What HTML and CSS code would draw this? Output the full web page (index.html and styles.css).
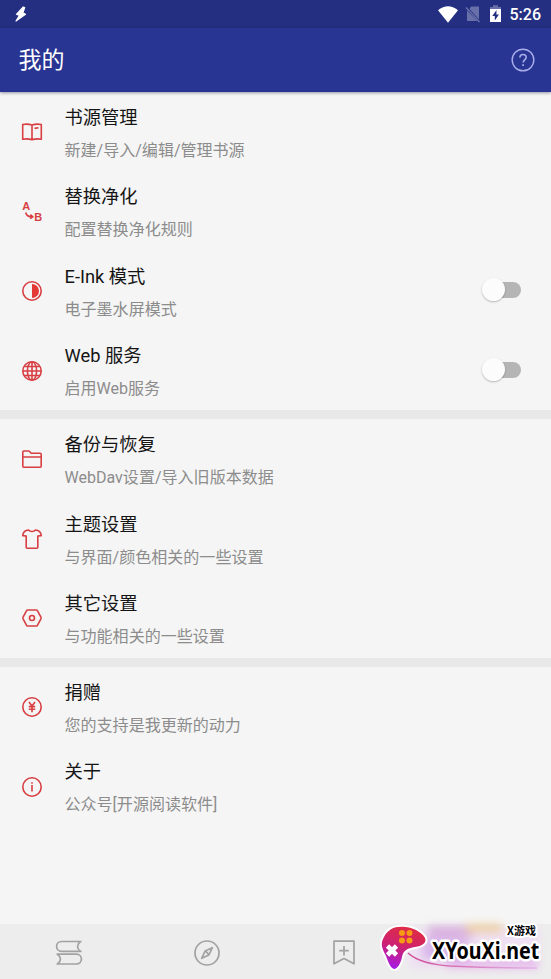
FILE: index.html
```html
<!DOCTYPE html>
<html lang="zh-CN">
<head>
<meta charset="utf-8">
<title>我的</title>
<link rel="stylesheet" href="styles.css">
</head>
<body>
<div class="screen">
  <div class="status">
    <svg class="bolt" width="14" height="18" viewBox="0 0 14 18"><path d="M9.3 2 2.4 9.3l3 1.2L2 16l9.5-6.8-2.6-1.4 1.8-5.3z" fill="#fff" stroke="#fff" stroke-width="1.2" stroke-linejoin="round"/></svg>
    <div class="status-right">
      <svg width="20" height="17" viewBox="0 0 20 17"><path d="M0 4.3Q10-4 20 4.3L10 16.7z" fill="#fff"/></svg>
      <svg class="sim" width="16" height="18" viewBox="0 0 16 18"><path d="M6 1.5h8v13L4.5 4zM2 5.5 12.5 16H2z" fill="#686fa9"/><path d="M1 2.5 14.5 17" stroke="#686fa9" stroke-width="1.5"/></svg>
      <svg class="battery" width="11" height="18" viewBox="0 0 11 18"><path d="M0 2h3V.3h5V2h3v3H0z" fill="#686fa9"/><path d="M0 4h11v13H0z" fill="#fff"/><path d="M6.5 5 2.3 11h2.5v4.5L9 9.5H6.4z" fill="#242f82"/></svg>
      <span class="clock">5:26</span>
    </div>
  </div>
  <header class="bar">
    <h1>我的</h1>
    <svg width="24" height="24" viewBox="0 0 24 24" fill="none" stroke="#a9aeea" stroke-width="1.4"><circle cx="12" cy="12" r="10.8"/><path d="M8.9 9.5c0-4.1 6.3-4 6.3-.2 0 2.4-3.1 2.6-3.1 5.3" stroke-width="1.6"/><path d="M12.1 16.2v1.9" stroke-width="1.7"/></svg>
  </header>
  <main class="list">
    <section>
      <div class="row">
        <svg class="icon" viewBox="0 0 22 22"><path d="M1.7 3.5c3-.6 6-.6 9.3.4 3.3-1 6.3-1 9.3-.4v14.8c-3-.6-6-.6-9.3.5-3.3-1.1-6.3-1.1-9.3-.5zM11 4V19M13.5 7.4l4-.6"/></svg>
        <div class="text"><b>书源管理</b><span>新建/导入/编辑/管理书源</span></div>
      </div>
      <div class="row">
        <svg class="icon" viewBox="0 0 22 22"><text x="1.2" y="10" class="letter">A</text><text x="13.2" y="20.7" class="letter">B</text><path d="M4.7 12.5c.6 2.8 2.8 4.4 6.5 4.4M9.4 14.7l2.5 2.2-2.7 1.8"/></svg>
        <div class="text"><b>替换净化</b><span>配置替换净化规则</span></div>
      </div>
      <div class="row">
        <svg class="icon" viewBox="0 0 22 22"><circle cx="11" cy="11" r="9.2"/><path class="solid" d="M11 4a7 7 0 0 1 0 14z"/></svg>
        <div class="text"><b>E-Ink 模式</b><span>电子墨水屏模式</span></div>
        <i class="switch"></i>
      </div>
      <div class="row">
        <svg class="icon" viewBox="0 0 22 22"><circle cx="11" cy="11" r="9.2"/><ellipse cx="11" cy="11" rx="4.6" ry="9.2"/><path d="M11 2v18M2 11h18M3.5 6.5h15M3.5 15.5h15"/></svg>
        <div class="text"><b>Web 服务</b><span>启用Web服务</span></div>
        <i class="switch"></i>
      </div>
    </section>
    <section>
      <div class="row">
        <svg class="icon" viewBox="0 0 22 22"><path d="M1.8 4q0-1 1-1H8l2.2 2.3h9q1 0 1 1v11.9q0 1-1 1H2.8q-1 0-1-1zM2 9h18"/></svg>
        <div class="text"><b>备份与恢复</b><span>WebDav设置/导入旧版本数据</span></div>
      </div>
      <div class="row">
        <svg class="icon" viewBox="0 0 22 22"><path d="M7.5 2c1.5 2 5.5 2 7 0 3.5.3 5.4 1.6 5.8 5.6l-3.5.4v11.3q0 1-1 1H6.2q-1 0-1-1V8l-3.5-.4c.4-4 2.3-5.3 5.8-5.6z"/></svg>
        <div class="text"><b>主题设置</b><span>与界面/颜色相关的一些设置</span></div>
      </div>
      <div class="row">
        <svg class="icon" viewBox="0 0 22 22"><path d="M6.6 3h8.8q.7 0 1 .6l3.5 6.6q.4.8 0 1.6l-3.5 6.6q-.3.6-1 .6H6.6q-.7 0-1-.6l-3.5-6.6q-.4-.8 0-1.6l3.5-6.6q.3-.6 1-.6z"/><circle cx="11" cy="11" r="2.5"/></svg>
        <div class="text"><b>其它设置</b><span>与功能相关的一些设置</span></div>
      </div>
    </section>
    <section>
      <div class="row">
        <svg class="icon" viewBox="0 0 22 22"><circle cx="11" cy="11" r="9.2"/><path d="M8 6l3 4 3-4M11 10v6.3M7.8 10.6h6.4M7.8 13.2h6.4"/></svg>
        <div class="text"><b>捐赠</b><span>您的支持是我更新的动力</span></div>
      </div>
      <div class="row">
        <svg class="icon" viewBox="0 0 22 22"><circle cx="11" cy="11" r="9.2"/><path d="M11 9v6.5M11 6.2v1.6"/></svg>
        <div class="text"><b>关于</b><span>公众号[开源阅读软件]</span></div>
      </div>
    </section>
  </main>
  <nav class="tabs">
    <svg viewBox="0 0 28 28"><path d="M26.5 2.5H6.5a4.9 4.9 0 0 0 0 9.8h20M25.5 2.5c-4 3-4 6.8 0 9.8M1.5 15.2h20a4.9 4.9 0 0 1 0 9.8h-20M2.5 15.2c4 3 4 6.8 0 9.8"/></svg>
    <svg viewBox="0 0 28 28"><circle cx="14" cy="14" r="12"/><path d="M19.3 8.7 15.9 16 8.7 19.3 12.1 12zM12.8 12.3l2.9 3"/></svg>
    <svg viewBox="0 0 28 28"><path d="M4 2.2h20v22.6l-10-5.2-10 5.2zM14 7v9.4M9.3 11.7h9.4"/></svg>
    <span></span>
  </nav>
  <svg class="mark" width="185" height="64" viewBox="0 0 185 64">
    <defs>
      <linearGradient id="pad" x1="0.6" y1="0" x2="0.3" y2="1"><stop offset="0" stop-color="#e02c43"/><stop offset=".5" stop-color="#cc2174"/><stop offset="1" stop-color="#a51be6"/></linearGradient>
      <linearGradient id="tail"><stop offset="0" stop-color="#d04c96"/><stop offset="1" stop-color="#e5b4ec"/></linearGradient>
      <filter id="soft" x="-20%" y="-50%" width="140%" height="200%"><feGaussianBlur stdDeviation="4"/></filter>
    </defs>
    <g filter="url(#soft)">
      <path d="M40 14h134v40H44z" fill="#efe0f3"/>
      <path d="M62 11h46v12H62z" fill="#d9b0e0"/>
      <path d="M100 9h36v9h-36z" fill="#efd0a4"/>
      <path d="M56 24h46v20H56z" fill="#d8b5ea"/>
      <path d="M80 44h92v9H80z" fill="#e4b6ea"/>
    </g>
    <path d="M42 38Q54 49 84 51q45 2 87 2" fill="none" stroke="url(#tail)" stroke-width="1.5"/>
    <path d="M18 22C22 14 29 11 39 12c7 0 17 5 20 11 2 5-3 8-10 9-8 1-12 4-13 10-1 5-4 12-8 12-4-1-6-8-8-13-4-8-6-12-2-19z" fill="url(#pad)" stroke="#fff" stroke-width="4" paint-order="stroke" stroke-linejoin="round"/>
    <g fill="#f59b14"><circle cx="36" cy="18" r="3"/><circle cx="43.5" cy="18" r="3"/><circle cx="36" cy="25.5" r="3"/><circle cx="43.5" cy="25.5" r="3"/></g>
    <path d="m21.5 31 9 9m0-9-9 9" stroke="#fff" stroke-width="4.6"/>
    <text class="mark-small" x="141" y="20">X游戏</text>
    <text class="mark-big" transform="translate(66 44) scale(.82 1)">XYouXi.net</text>
  </svg>
</div>
</body>
</html>
```

FILE: styles.css
```css
* { box-sizing: border-box; }
body {
  margin: 0;
  font-family: Roboto, "Noto Sans CJK SC", sans-serif;
  background: #f5f5f5;
}
.screen {
  position: relative;
  display: flex;
  flex-direction: column;
  width: 551px;
  height: 979px;
  overflow: hidden;
}
.status {
  display: flex;
  justify-content: space-between;
  align-items: center;
  height: 28px;
  padding: 0 9px 0 14px;
  background: #242f82;
}
.status-right { display: flex; align-items: center; margin-right: 1px; }
.status svg { display: block; }
.sim { margin-left: 7px; }
.battery { margin-left: 9px; }
.clock {
  margin-left: 9px;
  padding-top: 1px;
  color: #fff;
  font-size: 16px;
  font-weight: 500;
  line-height: 28px;
}
.bar {
  z-index: 1;
  display: flex;
  justify-content: space-between;
  align-items: center;
  height: 64px;
  padding: 0 16px 0 18.5px;
  background: #293593;
  box-shadow: 0 1px 3px rgba(0, 0, 40, .4);
}
.bar h1 {
  margin: 0;
  padding-top: 2px;
  color: #fff;
  font-size: 23px;
  font-weight: 400;
  line-height: 34px;
}
.list { flex: 1; }
section + section { border-top: 9px solid #e8e8e8; }
.row {
  display: flex;
  align-items: center;
  height: 79.6px;
  padding: 0 30px 0 21px;
}
.icon {
  width: 22px;
  height: 22px;
  fill: none;
  stroke: #d83f43;
  stroke-width: 1.6;
  stroke-linejoin: round;
}
.icon .solid { fill: #e53935; stroke: none; }
.letter {
  fill: #d83f43;
  stroke: none;
  font: 700 11px "Liberation Sans", sans-serif;
}
.text { flex: 1; margin-left: 21.5px; padding-top: 3.8px; }
.text b, .text span { display: block; white-space: nowrap; }
.text b {
  margin-bottom: 8px;
  color: #151515;
  font-size: 18.3px;
  font-weight: 400;
  line-height: 26px;
}
.text span {
  color: #8c8c8c;
  font-size: 16.05px;
  line-height: 24px;
}
.switch {
  display: flex;
  align-items: center;
  width: 33px;
  height: 16px;
  margin-bottom: 2px;
  border-radius: 8px;
  background: #b5b5b5;
}
.switch::before {
  content: "";
  flex: none;
  width: 23px;
  height: 23px;
  margin-left: -6px;
  border-radius: 50%;
  background: #fcfcfc;
  box-shadow: 0 1px 2px rgba(0, 0, 0, .25);
}
.tabs {
  display: grid;
  grid-template-columns: repeat(4, 1fr);
  place-items: center;
  height: 54px;
  padding-top: 2px;
  background: #ededed;
  box-shadow: 0 0 2px rgba(0, 0, 0, .1);
}
.tabs svg {
  width: 28px;
  height: 28px;
  fill: none;
  stroke: #a2a2a2;
  stroke-width: 1.7;
  stroke-linejoin: round;
}
.mark { position: absolute; right: 0; bottom: 0; }
.mark text {
  fill: #000;
  stroke: #fff;
  stroke-linejoin: round;
  paint-order: stroke;
}
.mark-small { font: 700 11px "Noto Sans CJK SC", sans-serif; stroke-width: 4; }
.mark-big { font: 700 24px "Noto Sans", sans-serif; stroke-width: 5; }
```
